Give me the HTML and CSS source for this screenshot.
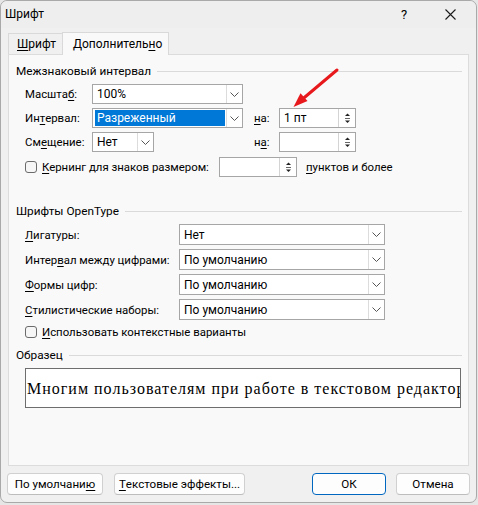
FILE: index.html
```html
<!DOCTYPE html>
<html lang="ru">
<head>
<meta charset="utf-8">
<title>Шрифт</title>
<link rel="stylesheet" href="styles.css">
</head>
<body>
<div class="window">
  <div class="titlebar">
    <span class="title">Шрифт</span>
    <span class="help">?</span>
    <span class="close"><svg width="11" height="11" viewBox="0 0 11 11"><path d="M0.5 0.5 L10.5 10.5 M10.5 0.5 L0.5 10.5" stroke="#1a1a1a" stroke-width="1.1" fill="none"/></svg></span>
  </div>
  <div class="tabs">
    <div class="tab"><u>Ш</u>рифт</div>
    <div class="tab active">Дополнитель<u>н</u>о</div>
  </div>
  <div class="panel">
    <div class="group-head">Межзнаковый интервал</div>
    <div class="spacing">
      <div class="lbl">Масшта<u>б</u>:</div>
      <div class="select s-wide"><span class="val">100%</span><span class="drop"><svg width="9" height="5" viewBox="0 0 9 5"><path d="M0.5 0.5 L4.5 4.5 L8.5 0.5" stroke="#555" fill="none"/></svg></span></div>
      <div></div><div></div><div></div>

      <div class="lbl">Ин<u>т</u>ервал:</div>
      <div class="select s-wide"><span class="val"><span class="hl">Разреженный</span></span><span class="drop"><svg width="9" height="5" viewBox="0 0 9 5"><path d="M0.5 0.5 L4.5 4.5 L8.5 0.5" stroke="#555" fill="none"/></svg></span></div>
      <div></div>
      <div class="lbl"><u>н</u>а:</div>
      <div class="spin s77"><span class="val">1 пт</span><span class="arrows"><svg width="7" height="12" viewBox="0 0 7 12"><path d="M1 4 L6 4 L3.5 1.5 Z" fill="#222"/><path d="M1 6.5 L6 6.5" stroke="#666"/><path d="M1 8.5 L6 8.5 L3.5 11 Z" fill="#222"/></svg></span></div>

      <div class="lbl">См<u>е</u>щение:</div>
      <div class="select s-narrow"><span class="val">Нет</span><span class="drop"><svg width="9" height="5" viewBox="0 0 9 5"><path d="M0.5 0.5 L4.5 4.5 L8.5 0.5" stroke="#555" fill="none"/></svg></span></div>
      <div></div>
      <div class="lbl">н<u>а</u>:</div>
      <div class="spin s77"><span class="val"></span><span class="arrows"><svg width="7" height="12" viewBox="0 0 7 12"><path d="M1 4 L6 4 L3.5 1.5 Z" fill="#222"/><path d="M1 6.5 L6 6.5" stroke="#666"/><path d="M1 8.5 L6 8.5 L3.5 11 Z" fill="#222"/></svg></span></div>
    </div>
    <div class="kern-row">
      <span class="check"></span>
      <span class="kern-lbl"><u>К</u>ернинг для знаков размером:</span>
      <div class="spin s78"><span class="val"></span><span class="arrows"><svg width="7" height="12" viewBox="0 0 7 12"><path d="M1 4 L6 4 L3.5 1.5 Z" fill="#222"/><path d="M1 6.5 L6 6.5" stroke="#666"/><path d="M1 8.5 L6 8.5 L3.5 11 Z" fill="#222"/></svg></span></div>
      <span class="kern-after"><u>п</u>унктов и более</span>
    </div>

    <div class="group-head g2">Шрифты OpenType</div>
    <div class="otf">
      <div class="lbl"><u>Л</u>игатуры:</div>
      <div class="select s-otf"><span class="val">Нет</span><span class="drop"><svg width="9" height="5" viewBox="0 0 9 5"><path d="M0.5 0.5 L4.5 4.5 L8.5 0.5" stroke="#555" fill="none"/></svg></span></div>
      <div class="lbl">Интер<u>в</u>ал между цифрами:</div>
      <div class="select s-otf"><span class="val">По умолчанию</span><span class="drop"><svg width="9" height="5" viewBox="0 0 9 5"><path d="M0.5 0.5 L4.5 4.5 L8.5 0.5" stroke="#555" fill="none"/></svg></span></div>
      <div class="lbl"><u>Ф</u>ормы цифр:</div>
      <div class="select s-otf"><span class="val">По умолчанию</span><span class="drop"><svg width="9" height="5" viewBox="0 0 9 5"><path d="M0.5 0.5 L4.5 4.5 L8.5 0.5" stroke="#555" fill="none"/></svg></span></div>
      <div class="lbl"><u>С</u>тилистические наборы:</div>
      <div class="select s-otf"><span class="val">По умолчанию</span><span class="drop"><svg width="9" height="5" viewBox="0 0 9 5"><path d="M0.5 0.5 L4.5 4.5 L8.5 0.5" stroke="#555" fill="none"/></svg></span></div>
    </div>
    <div class="ctx-row">
      <span class="check"></span>
      <span class="kern-lbl"><u>И</u>спользовать контекстные варианты</span>
    </div>

    <div class="group-head g3">Образец</div>
    <div class="sample"><span class="sample-text">Многим пользователям при работе в текстовом редактор</span></div>
  </div>
  <div class="buttons">
    <button class="btn b-default">По умолчани<u>ю</u></button>
    <button class="btn b-effects"><u>Т</u>екстовые эффекты...</button>
    <span class="spacer"></span>
    <button class="btn b-ok">ОК</button>
    <button class="btn b-cancel">Отмена</button>
  </div>
  <svg class="arrow" width="478" height="505" viewBox="0 0 478 505">
    <path d="M337 70 L302 99.5" stroke="#e8191c" stroke-width="3" stroke-linecap="round" fill="none"/>
    <path d="M293.5 107 L307.5 101 L300.5 93.2 Z" fill="#e8191c"/>
  </svg>
</div>
</body>
</html>
```

FILE: styles.css
```css
* { box-sizing: border-box; }
html, body { margin: 0; padding: 0; }
body {
  background: #e6e6e6;
  font-family: Roboto, "Noto Sans", sans-serif;
  font-size: 11.4px;
  color: #000;
  width: 478px;
  height: 505px;
  overflow: hidden;
}
u { text-decoration: underline; text-underline-offset: 2px; text-decoration-thickness: 1px; }

.window {
  position: relative;
  width: 477px;
  height: 503px;
  background: #f0f0f0;
  border: 1px solid #a9a9a9;
  border-radius: 7px;
  display: flex;
  flex-direction: column;
}

.titlebar {
  height: 27px;
  display: flex;
  align-items: center;
  padding-left: 4px;
  background: #eeeeee;
  border-radius: 7px 7px 0 0;
}
.title { flex: 1; padding-bottom: 1px; font-size: 12px; }
.help { width: 44px; text-align: center; font-size: 13px; margin-right: 2px; }
.close { width: 44px; display: flex; justify-content: center; margin-right: 4px; }

.tabs {
  margin-top: 5px;
  height: 21px;
  display: flex;
  align-items: flex-end;
  padding-left: 7px;
}
.tab {
  height: 21px;
  padding: 0 8px;
  border: 1px solid #d9d9d9;
  border-bottom: none;
  background: #f0f0f0;
  display: flex;
  align-items: center;
  width: 55px;
  font-size: 12px;
}
.tab.active {
  width: 107px;
  height: 23px;
  margin-bottom: -1px;
  margin-left: -1px;
  background: #f9f9f9;
  padding-left: 10px;
  position: relative;
  z-index: 1;
}

.panel {
  margin-left: 7px;
  width: 461px;
  height: 412px;
  background: #f9f9f9;
  border: 1px solid #dcdcdc;
  padding: 8px 6px 0 7px;
  display: flex;
  flex-direction: column;
}
.group-head {
  height: 16px;
  display: flex;
  align-items: center;
  gap: 6px;
  white-space: nowrap;
  font-size: 11.8px;
}
.group-head::after {
  content: "";
  flex: 1;
  height: 1px;
  background: #dadada;
}
.g2 { margin-top: 26px; }
.g3 { margin-top: 6px; }

.lbl { white-space: nowrap; display: flex; align-items: center; }

.spacing {
  margin-top: 5px;
  margin-left: 9px;
  display: grid;
  grid-template-columns: 67px 151px 11px 25px 77px;
  grid-auto-rows: 20px;
  row-gap: 4px;
}

.select, .spin {
  display: flex;
  height: 20px;
  border: 1px solid #a6a6a6;
  background: #fff;
}
.val {
  flex: 1;
  padding-left: 4px;
  display: flex;
  align-items: center;
  white-space: nowrap;
  overflow: hidden;
  font-size: 12px;
}
.hl {
  background: #0078d7;
  color: #fff;
  align-self: stretch;
  flex: 1;
  margin: 1px 1px 1px -2px;
  padding-left: 2px;
  display: flex;
  align-items: center;
}
.drop {
  width: 16px;
  margin: 0;
  border-left: 1px solid #dcdcdc;
  background: #fff;
  display: flex;
  align-items: center;
  justify-content: center;
}
.s-wide { width: 151px; }
.s-narrow { width: 62px; }
.s77 { width: 77px; }
.s78 { width: 78px; }
.s-otf { width: 206px; height: 21px; }

.arrows {
  width: 17px;
  border-left: 1px solid #d4d4d4;
  display: flex;
  align-items: center;
  justify-content: center;
}

.kern-row {
  margin-top: 5px;
  margin-left: 9px;
  height: 20px;
  display: flex;
  align-items: center;
}
.check {
  width: 12px;
  height: 12px;
  border: 1px solid #6b6b6b;
  border-radius: 3px;
  background: #f6f6f6;
  margin-right: 5px;
  flex: none;
}
.kern-lbl { white-space: nowrap; width: 177px; }
.ctx-row .kern-lbl { width: auto; }
.kern-after { margin-left: 9px; white-space: nowrap; }

.otf {
  margin-top: 5px;
  margin-left: 9px;
  display: grid;
  grid-template-columns: 154px 206px;
  grid-auto-rows: 21px;
  row-gap: 4px;
}

.ctx-row {
  margin-top: 3px;
  margin-left: 9px;
  height: 18px;
  display: flex;
  align-items: center;
}

.sample {
  margin-top: 5px;
  margin-left: 9px;
  width: 436px;
  height: 40px;
  border: 1px solid #6e6e6e;
  background: #fff;
  overflow: hidden;
  white-space: nowrap;
  display: flex;
  align-items: center;
  padding-left: 1px;
}
.sample-text {
  font-family: "Liberation Serif", "Times New Roman", serif;
  font-size: 16px;
  letter-spacing: 1px;
  padding-top: 2px;
}

.buttons {
  margin-top: 7px;
  display: flex;
  padding-left: 6px;
  padding-right: 6px;
  height: 22px;
}
.btn {
  font-family: inherit;
  font-size: 11.6px;
  color: #000;
  height: 22px;
  background: #fdfdfd;
  border: 1px solid #d0d0d0;
  border-bottom-color: #bdbdbd;
  border-radius: 4px;
  padding: 0;
  display: flex;
  align-items: center;
  justify-content: center;
}
.b-default { width: 96px; }
.b-effects { width: 131px; margin-left: 11px; }
.spacer { flex: 1; }
.b-ok { width: 74px; border: 1px solid #0067c0; }
.b-cancel { width: 74px; margin-left: 10px; }

.arrow {
  position: absolute;
  left: -1px;
  top: -1px;
  pointer-events: none;
}
```
